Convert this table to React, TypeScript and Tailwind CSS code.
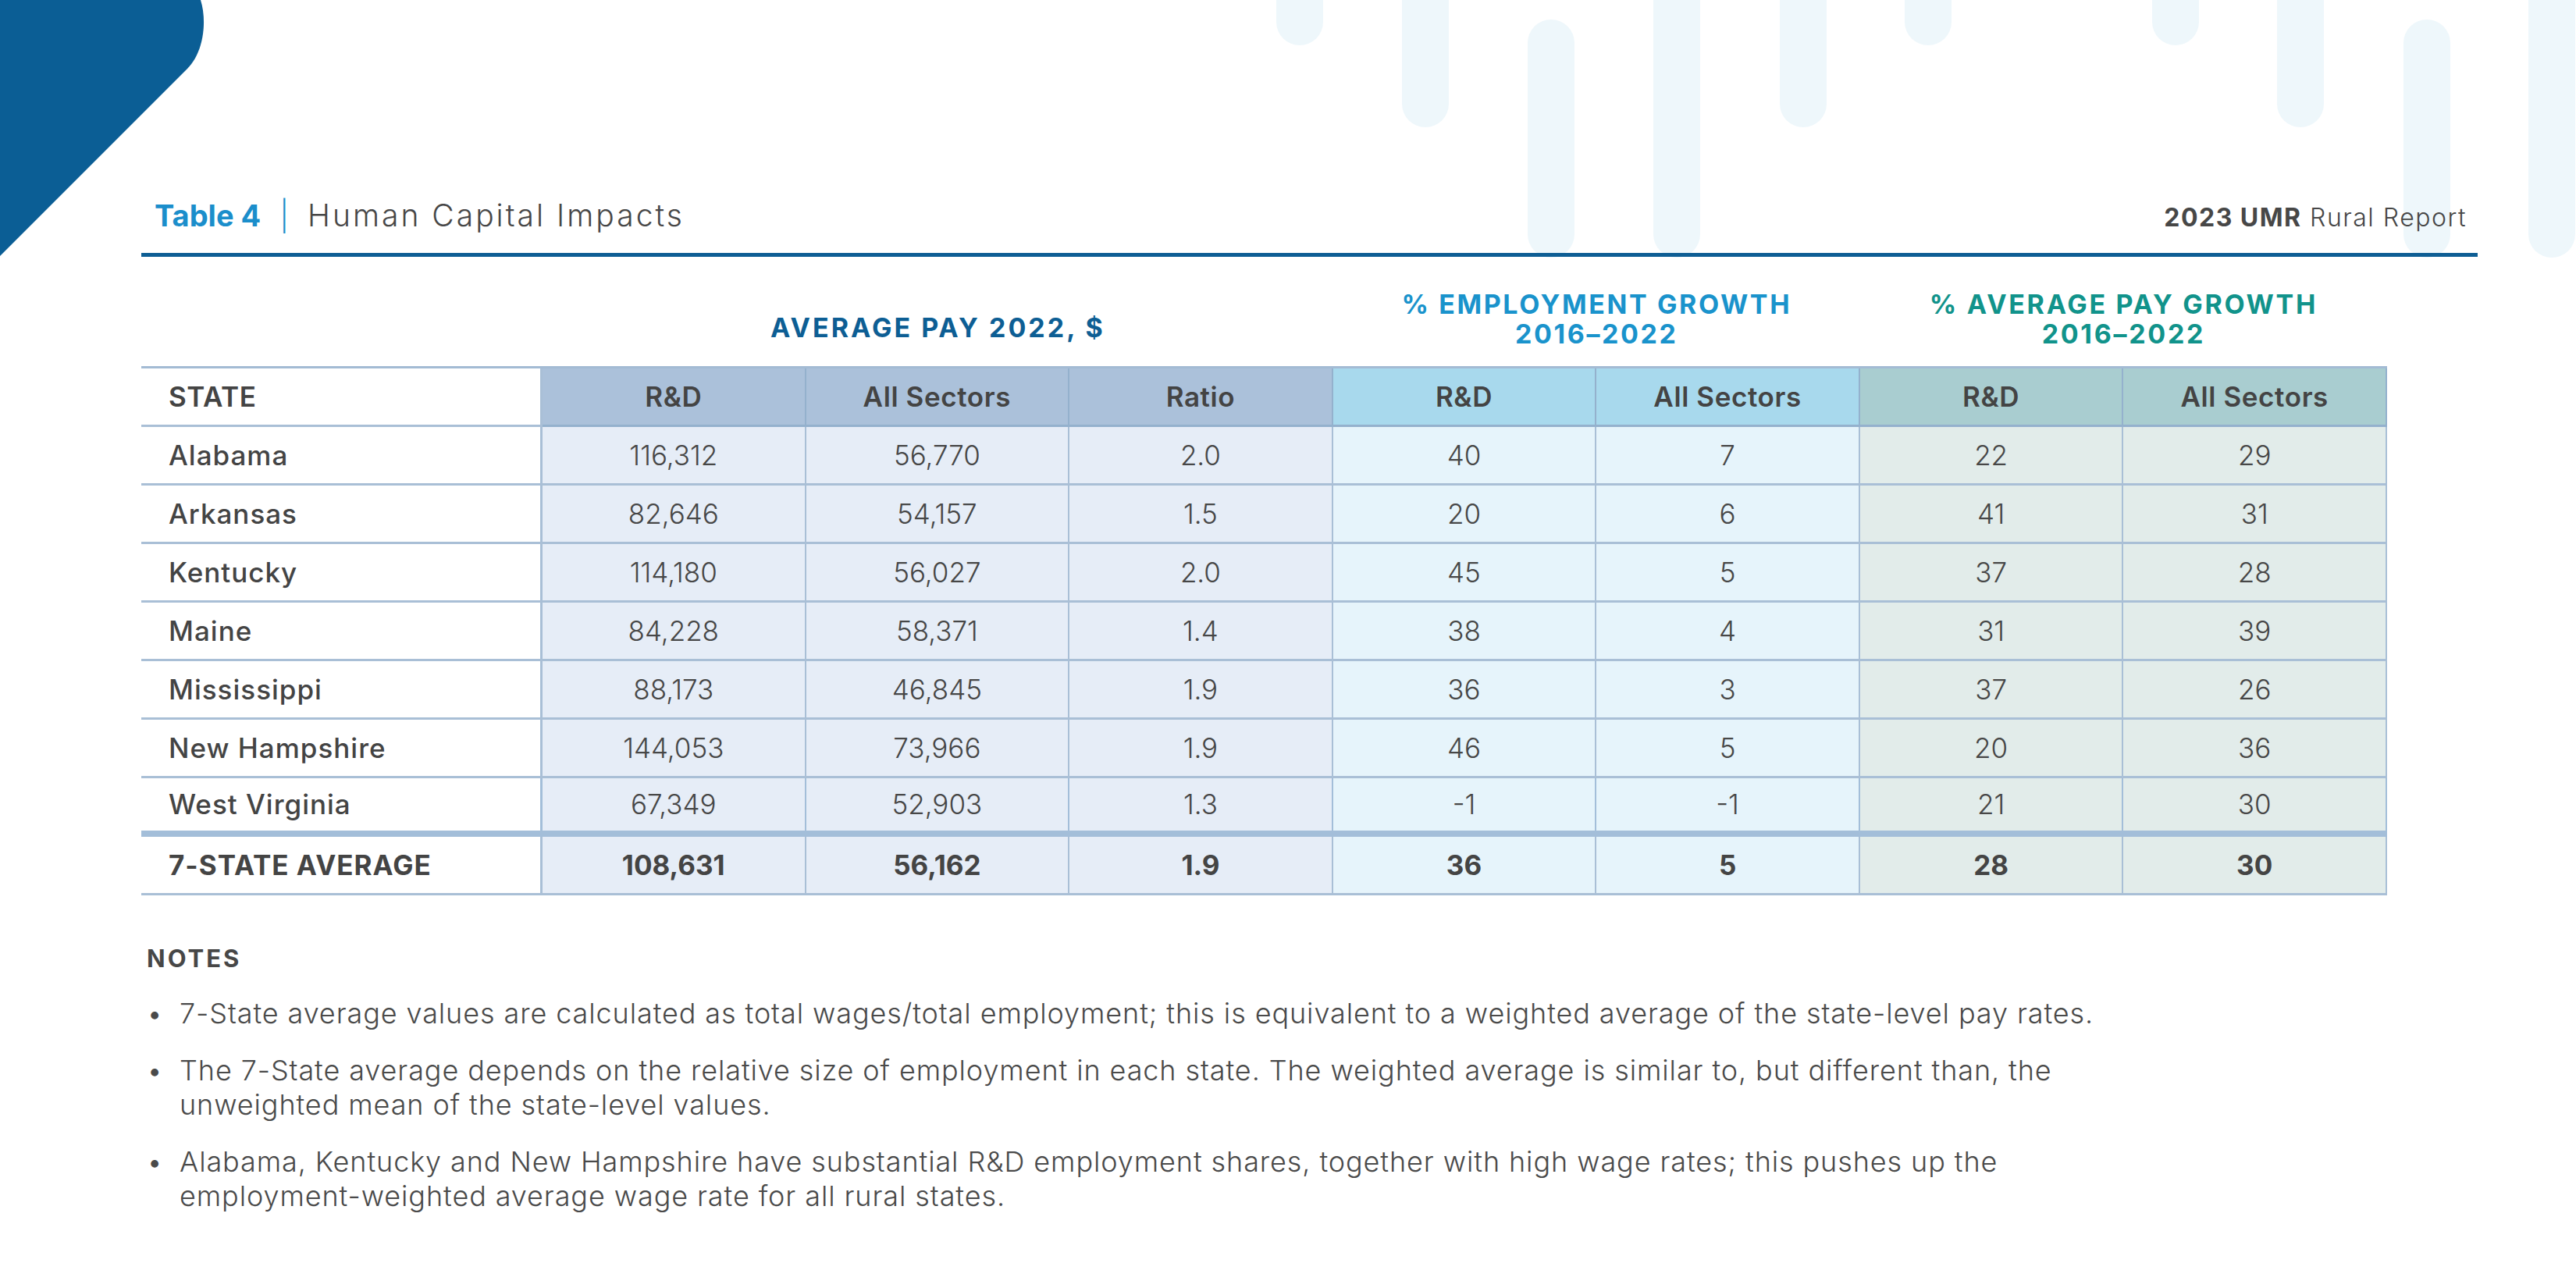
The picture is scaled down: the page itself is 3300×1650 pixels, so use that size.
import React from "react";

const rows: string[][] = [
  ["Alabama", "116,312", "56,770", "2.0", "40", "7", "22", "29"],
  ["Arkansas", "82,646", "54,157", "1.5", "20", "6", "41", "31"],
  ["Kentucky", "114,180", "56,027", "2.0", "45", "5", "37", "28"],
  ["Maine", "84,228", "58,371", "1.4", "38", "4", "31", "39"],
  ["Mississippi", "88,173", "46,845", "1.9", "36", "3", "37", "26"],
  ["New Hampshire", "144,053", "73,966", "1.9", "46", "5", "20", "36"],
  ["West Virginia", "67,349", "52,903", "1.3", "-1", "-1", "21", "30"],
];
const avg = ["7-STATE AVERAGE", "108,631", "56,162", "1.9", "36", "5", "28", "30"];

const dataBg = [
  "bg-[#e6edf7]",
  "bg-[#e6edf7]",
  "bg-[#e6edf7]",
  "bg-[#e6f4fb]",
  "bg-[#e6f4fb]",
  "bg-[#e2ecea]",
  "bg-[#e2ecea]",
];
const headBg = [
  "bg-[#abc1da]",
  "bg-[#abc1da]",
  "bg-[#abc1da]",
  "bg-[#a8d9ed]",
  "bg-[#a8d9ed]",
  "bg-[#a9cdd0]",
  "bg-[#a9cdd0]",
];
const headLabels = ["R&D", "All Sectors", "Ratio", "R&D", "All Sectors", "R&D", "All Sectors"];

const pills: { x: string; cls: string }[] = [
  { x: "left-[1635px]", cls: "top-[-60px] h-[118px]" },
  { x: "left-[1796px]", cls: "top-[-60px] h-[223px]" },
  { x: "left-[1957px]", cls: "top-[25px] h-[305px]" },
  { x: "left-[2118px]", cls: "top-[-60px] h-[390px]" },
  { x: "left-[2280px]", cls: "top-[-60px] h-[223px]" },
  { x: "left-[2440px]", cls: "top-[-60px] h-[118px]" },
  { x: "left-[2757px]", cls: "top-[-60px] h-[118px]" },
  { x: "left-[2917px]", cls: "top-[-60px] h-[223px]" },
  { x: "left-[3079px]", cls: "top-[25px] h-[305px]" },
  { x: "left-[3239px]", cls: "top-[-60px] h-[390px]" },
];

function Decorations() {
  return (
    <div className="pointer-events-none absolute inset-0">
      <svg className="absolute left-0 top-0" width="270" height="340" viewBox="0 0 270 340">
        <path d="M0 0 L257 0 C265 25 262 66 240 88 L0 328 Z" fill="#0b5e95" />
      </svg>
      {pills.map((p, i) => (
        <div key={i} className={`absolute w-[60px] rounded-full bg-[#eef7fb] ${p.x} ${p.cls}`} />
      ))}
    </div>
  );
}

export default function App() {
  return (
    <div className="relative h-[1650px] w-[3300px] overflow-hidden bg-white font-['Inter',sans-serif] text-[#474747]">
      <Decorations />
      <div className="relative pl-[181px] pr-[126px]">
        {/* Title bar */}
        <div className="flex h-[329px] flex-col justify-end border-b-[5px] border-[#0e5e94] pb-[22px]">
          <div className="flex items-baseline justify-between pr-[14px]">
            <div className="flex items-baseline pl-[17px] text-[38px] leading-[46px]">
              <span className="font-bold text-[#1b8ecb]">Table 4</span>
              <span className="ml-[24px] mr-[24px] font-light text-[#1b8ecb]">|</span>
              <span className="text-[39px] font-light tracking-[3px] text-[#474747]">Human Capital Impacts</span>
            </div>
            <div className="text-[32px] leading-[46px] tracking-[1.5px] text-[#474747]">
              <span className="font-bold">2023 UMR</span>
              <span className="font-light"> Rural Report</span>
            </div>
          </div>
        </div>

        {/* Table */}
        <div className="w-[2877px]">
          <div className="grid h-[140px] grid-cols-[514px_repeat(7,1fr)]">
            <div />
            <div className="col-span-3 flex items-end justify-center pb-[30px] text-center text-[34px] font-bold leading-[38px] tracking-[3px] text-[#0d5e94]">
              AVERAGE PAY 2022, $
            </div>
            <div className="col-span-2 flex items-end justify-center pb-[22px] text-center text-[34px] font-bold leading-[38px] tracking-[2.6px] text-[#1a93cc]">
              <div>
                % EMPLOYMENT GROWTH
                <br />
                2016–2022
              </div>
            </div>
            <div className="col-span-2 flex items-end justify-center pb-[22px] text-center text-[34px] font-bold leading-[38px] tracking-[2.7px] text-[#11938b]">
              <div>
                % AVERAGE PAY GROWTH
                <br />
                2016–2022
              </div>
            </div>
          </div>

          <div className="grid grid-cols-[514px_repeat(7,1fr)] border-t-[3px] border-[#a3bbd4]">
            {/* Header row */}
            <div className="flex h-[75px] items-center border-b-[3px] border-r-[3px] border-[#a9bfd6] pl-[35px] text-[35px] font-semibold tracking-[0.6px] text-[#444]">
              STATE
            </div>
            {headLabels.map((h, i) => (
              <div
                key={`h${i}`}
                className={`flex h-[75px] items-center justify-center border-b-[3px] border-r-[2px] border-[#94b1cd] text-[35px] font-semibold tracking-[0.6px] text-[#444] ${headBg[i]}`}
              >
                {h}
              </div>
            ))}

            {rows.map((r, ri) => {
              const last = ri === rows.length - 1;
              return (
                <React.Fragment key={r[0]}>
                  <div
                    className={`flex h-[75px] items-center border-r-[3px] pl-[35px] text-[35px] font-medium tracking-[1px] text-[#444] ${
                      last ? "border-b-[8px] border-[#a3bed9]" : "border-b-[3px] border-[#a9bfd6]"
                    }`}
                  >
                    {r[0]}
                  </div>
                  {r.slice(1).map((v, ci) => (
                    <div
                      key={ci}
                      className={`flex h-[75px] items-center justify-center border-r-[2px] text-[35px] font-light text-[#474747] ${dataBg[ci]} ${
                        last ? "border-b-[8px] border-[#a3bed9]" : "border-b-[3px] border-[#a9bfd6]"
                      }`}
                    >
                      {v}
                    </div>
                  ))}
                </React.Fragment>
              );
            })}

            <div className="flex h-[75px] items-center border-b-[3px] border-r-[3px] border-[#a9bfd6] pl-[35px] text-[35px] font-bold tracking-[1px] text-[#444]">
              {avg[0]}
            </div>
            {avg.slice(1).map((v, ci) => (
              <div
                key={`a${ci}`}
                className={`flex h-[75px] items-center justify-center border-b-[3px] border-r-[2px] border-[#a9bfd6] text-[35px] font-bold text-[#444] ${dataBg[ci]}`}
              >
                {v}
              </div>
            ))}
          </div>
        </div>

        {/* Notes */}
        <div className="mt-[62px] pl-[7px]">
          <div className="text-[31px] font-bold leading-[38px] tracking-[3px] text-[#474747]">NOTES</div>
          <div className="mt-[29px] flex flex-col gap-[29px] text-[36px] font-light leading-[44px] tracking-[0.9px] text-[#4a4a4a]">
            <div className="flex">
              <span className="w-[42px] shrink-0">•</span>
              <span className="whitespace-nowrap">
                7-State average values are calculated as total wages/total employment; this is equivalent to a weighted average of the state-level pay rates.
              </span>
            </div>
            <div className="flex">
              <span className="w-[42px] shrink-0">•</span>
              <span className="whitespace-nowrap">
                The 7-State average depends on the relative size of employment in each state. The weighted average is similar to, but different than, the
                <br />
                unweighted mean of the state-level values.
              </span>
            </div>
            <div className="flex">
              <span className="w-[42px] shrink-0">•</span>
              <span className="whitespace-nowrap">
                Alabama, Kentucky and New Hampshire have substantial R&amp;D employment shares, together with high wage rates; this pushes up the
                <br />
                employment-weighted average wage rate for all rural states.
              </span>
            </div>
          </div>
        </div>
      </div>
    </div>
  );
}
